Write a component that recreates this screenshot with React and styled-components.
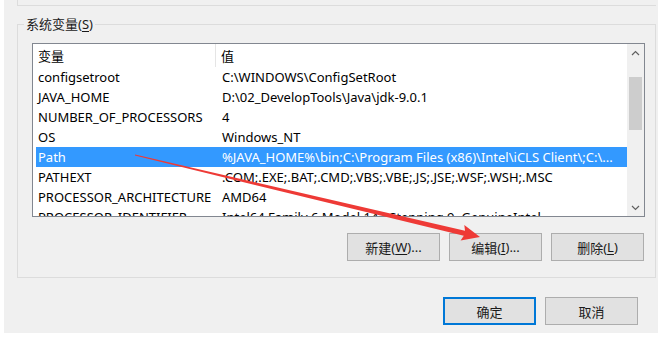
import React from "react";
import styled, { createGlobalStyle } from "styled-components";

const Global = createGlobalStyle`
  html, body { margin: 0; padding: 0; background: #ffffff; }
  body { font-family: "Noto Sans", "Noto Sans CJK SC", sans-serif; }
`;

const Stage = styled.div`
  position: relative;
  width: 663px;
  height: 337px;
  overflow: hidden;
`;

const Dialog = styled.div`
  margin-left: 4px;
  width: 654px;
  height: 333px;
  background: #f0f0f0;
  display: flex;
  flex-direction: column;
  color: #000;
  font-size: 13px;
`;

const PrevGroupEdge = styled.div`
  margin: 0 2px 0 13px;
  height: 5px;
  border-left: 1px solid #dcdcdc;
  border-bottom: 1px solid #dcdcdc;
`;

const GroupBox = styled.div`
  position: relative;
  margin: 18px 2px 0 13px;
  height: 254px;
  box-sizing: border-box;
  border: 1px solid #dcdcdc;
  padding: 18px 10px 0 14px;
`;

const Legend = styled.span`
  position: absolute;
  top: -10px;
  left: 6px;
  padding: 0 2px;
  background: #f0f0f0;
  line-height: 18px;
  color: #1a1a1a;
`;

const Key = styled.span`
  text-decoration: underline;
  text-underline-offset: 2px;
`;

const ListBox = styled.div`
  width: 613px;
  height: 174px;
  box-sizing: border-box;
  border: 1px solid #828790;
  background: #fff;
  display: flex;
  overflow: hidden;
`;

const Table = styled.div`
  flex: 1;
  display: flex;
  flex-direction: column;
  padding-left: 3px;
`;

const HeaderRow = styled.div`
  display: flex;
  height: 23px;
  align-items: center;
  flex: none;
`;

const HeaderCell = styled.div`
  box-sizing: border-box;
  height: 100%;
  display: flex;
  align-items: center;
  padding-left: ${(p) => (p.$first ? "2px" : "5px")};
  width: ${(p) => (p.$first ? "180px" : "auto")};
  flex: ${(p) => (p.$first ? "none" : "1")};
  border-right: ${(p) => (p.$first ? "1px solid #e5e5e5" : "none")};
`;

const Row = styled.div`
  display: flex;
  height: 20px;
  flex: none;
  align-items: center;
  background: ${(p) => (p.$selected ? "#3399ff" : "transparent")};
  color: ${(p) => (p.$selected ? "#ffffff" : "#000000")};
  white-space: nowrap;
`;

const Cell = styled.div`
  box-sizing: border-box;
  overflow: hidden;
  padding-left: ${(p) => (p.$first ? "2px" : "6px")};
  width: ${(p) => (p.$first ? "180px" : "auto")};
  flex: ${(p) => (p.$first ? "none" : "1")};
`;

const ScrollBar = styled.div`
  width: 17px;
  flex: none;
  background: #f0f0f0;
  display: flex;
  flex-direction: column;
  align-items: center;
`;

const ScrollArrow = styled.div`
  height: 17px;
  width: 17px;
  display: flex;
  align-items: center;
  justify-content: center;
  flex: none;
`;

const Track = styled.div`
  flex: 1;
  width: 100%;
  display: flex;
  flex-direction: column;
  align-items: center;
  padding-top: 16px;
`;

const Thumb = styled.div`
  width: 13px;
  height: 53px;
  background: #cdcdcd;
`;

const ButtonRow = styled.div`
  display: flex;
  justify-content: flex-end;
  gap: 9px;
  margin-top: 16px;
  margin-right: 1px;
`;

const Button = styled.div`
  width: 93px;
  height: 28px;
  box-sizing: border-box;
  background: #e1e1e1;
  border: 1px solid ${(p) => (p.$default ? "#0078d7" : "#adadad")};
  box-shadow: ${(p) => (p.$default ? "inset 0 0 0 1px #0078d7" : "none")};
  display: flex;
  align-items: center;
  justify-content: center;
  color: #1a1a1a;
`;

const Footer = styled.div`
  display: flex;
  justify-content: flex-end;
  gap: 9px;
  margin-top: 19px;
  padding-right: 20px;
`;

const Overlay = styled.svg`
  position: absolute;
  left: 0;
  top: 0;
  pointer-events: none;
`;

const Chevron = ({ up }) => (
  <svg width="9" height="6" viewBox="0 0 9 6">
    <path
      d={up ? "M1 5 L4.5 1.5 L8 5" : "M1 1 L4.5 4.5 L8 1"}
      fill="none"
      stroke="#606060"
      strokeWidth="1.2"
    />
  </svg>
);

const rows = [
  ["configsetroot", "C:\\WINDOWS\\ConfigSetRoot"],
  ["JAVA_HOME", "D:\\02_DevelopTools\\Java\\jdk-9.0.1"],
  ["NUMBER_OF_PROCESSORS", "4"],
  ["OS", "Windows_NT"],
  ["Path", "%JAVA_HOME%\\bin;C:\\Program Files (x86)\\Intel\\iCLS Client\\;C:\\..."],
  ["PATHEXT", ".COM;.EXE;.BAT;.CMD;.VBS;.VBE;.JS;.JSE;.WSF;.WSH;.MSC"],
  ["PROCESSOR_ARCHITECTURE", "AMD64"],
  ["PROCESSOR_IDENTIFIER", "Intel64 Family 6 Model 142 Stepping 9, GenuineIntel"],
];

function Arrow() {
  const sx = 135, sy = 155, tx = 480, ty = 237;
  const dx = tx - sx, dy = ty - sy;
  const len = Math.hypot(dx, dy);
  const ux = dx / len, uy = dy / len;
  const px = -uy, py = ux;
  const headLen = 18, headW = 8;
  const bx = tx - ux * headLen, by = ty - uy * headLen;
  const w0 = 0.6, w1 = 2.6;
  const pts = [
    [sx + px * w0, sy + py * w0],
    [bx + ux * 2 + px * w1, by + uy * 2 + py * w1],
    [bx + px * headW, by + py * headW],
    [tx, ty],
    [bx - px * headW, by - py * headW],
    [bx + ux * 2 - px * w1, by + uy * 2 - py * w1],
    [sx - px * w0, sy - py * w0],
  ]
    .map((p) => p.map((v) => v.toFixed(1)).join(","))
    .join(" ");
  return (
    <Overlay width="663" height="337" viewBox="0 0 663 337">
      <polygon points={pts} fill="#ee3a36" />
    </Overlay>
  );
}

export default function App() {
  return (
    <Stage>
      <Global />
      <Dialog>
        <PrevGroupEdge />
        <GroupBox>
          <Legend>
            系统变量(<Key>S</Key>)
          </Legend>
          <ListBox>
            <Table>
              <HeaderRow>
                <HeaderCell $first>变量</HeaderCell>
                <HeaderCell>值</HeaderCell>
              </HeaderRow>
              {rows.map(([k, v]) => (
                <Row key={k} $selected={k === "Path"}>
                  <Cell $first>{k}</Cell>
                  <Cell>{v}</Cell>
                </Row>
              ))}
            </Table>
            <ScrollBar>
              <ScrollArrow>
                <Chevron up />
              </ScrollArrow>
              <Track>
                <Thumb />
              </Track>
              <ScrollArrow>
                <Chevron />
              </ScrollArrow>
            </ScrollBar>
          </ListBox>
          <ButtonRow>
            <Button>
              新建(<Key>W</Key>)...
            </Button>
            <Button>
              编辑(<Key>I</Key>)...
            </Button>
            <Button>
              删除(<Key>L</Key>)
            </Button>
          </ButtonRow>
        </GroupBox>
        <Footer>
          <Button $default>确定</Button>
          <Button>取消</Button>
        </Footer>
      </Dialog>
      <Arrow />
    </Stage>
  );
}
